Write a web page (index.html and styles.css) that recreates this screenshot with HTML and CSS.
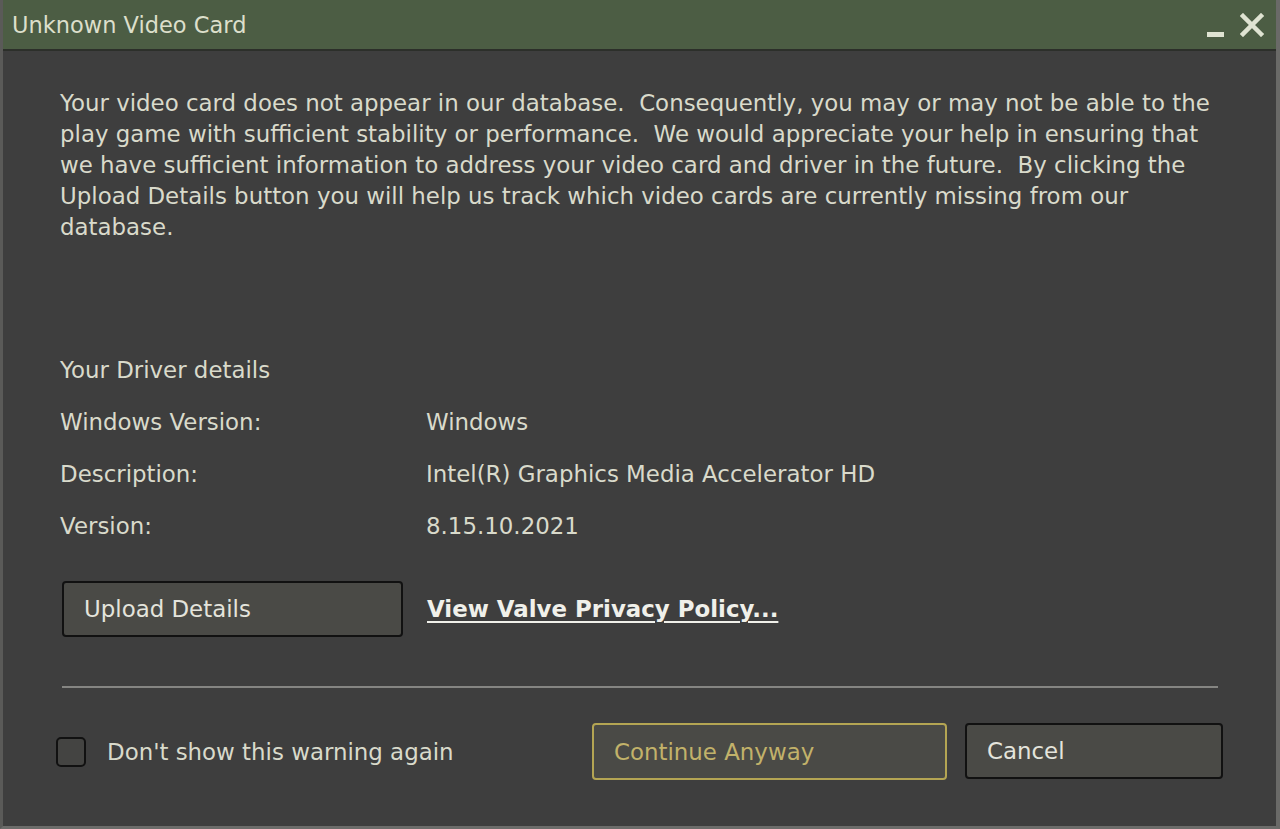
FILE: index.html
```html
<!doctype html>
<html lang="en">
<head>
    <meta charset="UTF-8">
    <title>Unknown Video Card</title>
    <link rel="stylesheet" href="styles.css">
</head>
<body>
    <div class="window">
        <div class="titlebar">
            <span class="title">Unknown Video Card</span>
            <div class="controls">
                <span class="minimize"></span>
                <svg class="close" width="24" height="24" viewBox="0 0 24 24">
                    <path d="M3 3 L21 21 M21 3 L3 21" stroke="#dfe3d2" stroke-width="4.5" stroke-linecap="square"/>
                </svg>
            </div>
        </div>
        <div class="content">
            <p class="message">
                Your video card does not appear in our database.&nbsp; Consequently, you may or may not be able to the<br>
                play game with sufficient stability or performance.&nbsp; We would appreciate your help in ensuring that<br>
                we have sufficient information to address your video card and driver in the future.&nbsp; By clicking the<br>
                Upload Details button you will help us track which video cards are currently missing from our<br>
                database.
            </p>

            <div class="details">
                <div class="details-title">Your Driver details</div>
                <div class="row"><span class="label">Windows Version:</span><span class="value">Windows</span></div>
                <div class="row"><span class="label">Description:</span><span class="value">Intel(R) Graphics Media Accelerator HD</span></div>
                <div class="row"><span class="label">Version:</span><span class="value">8.15.10.2021</span></div>
            </div>

            <div class="upload-row">
                <button class="btn upload">Upload Details</button>
                <a class="privacy" href="#">View Valve Privacy Policy...</a>
            </div>

            <hr class="divider">

            <div class="footer">
                <label class="check">
                    <span class="box"></span>
                    <span>Don't show this warning again</span>
                </label>
                <div class="actions">
                    <button class="btn continue">Continue Anyway</button>
                    <button class="btn cancel">Cancel</button>
                </div>
            </div>
        </div>
    </div>
</body>
</html>
```

FILE: styles.css
```css
html, body {
    margin: 0;
    padding: 0;
    height: 100%;
}

body {
    font-family: "DejaVu Sans", sans-serif;
    background-color: #3e3e3e;
    color: #d9dacb;
    overflow: hidden;
}

.window {
    height: 829px;
    box-sizing: border-box;
    border-left: 3px solid #5a5a58;
    border-right: 4px solid #6a6a68;
    border-bottom: 3px solid #6c6c6a;
    display: flex;
    flex-direction: column;
}

.titlebar {
    height: 49px;
    background-color: #4c5d44;
    border-bottom: 2px solid #2c2f2a;
    display: flex;
    align-items: center;
    justify-content: space-between;
    padding: 0 12px 0 9px;
}

.title {
    font-size: 22.5px;
    color: #dcdfcb;
}

.controls {
    display: flex;
    align-items: center;
    gap: 16px;
}

.minimize {
    width: 17px;
    height: 5px;
    background: #dfe3d2;
    margin-top: 20px;
}

.content {
    flex: 1;
    padding: 0 53px 0 57px;
}

.message {
    font-size: 22.9px;
    line-height: 31px;
    margin: 37px 0 0 0;
}

.details {
    margin-top: 101px;
    font-size: 22.9px;
}

.details-title {
    line-height: 52px;
}

.row {
    display: flex;
    line-height: 52px;
}

.label {
    width: 366px;
}

.upload-row {
    display: flex;
    align-items: center;
    margin-top: 29px;
}

.btn {
    font-family: inherit;
    font-size: 22.9px;
    text-align: left;
    background-color: #4a4a46;
    color: #e4e4dc;
    border: 2px solid #111;
    border-radius: 4px;
    padding: 0 20px;
    cursor: pointer;
}

.upload {
    width: 341px;
    height: 56px;
    margin-left: 2px;
}

.privacy {
    margin-left: 24px;
    font-size: 22.9px;
    font-weight: bold;
    color: #f0f0ea;
    text-decoration: underline;
    text-underline-offset: 4px;
    text-decoration-thickness: 2px;
}

.divider {
    border: none;
    border-top: 2px solid #858582;
    margin: 49px 5px 0 2px;
}

.footer {
    display: flex;
    align-items: center;
    justify-content: space-between;
    margin-top: 35px;
}

.check {
    display: flex;
    align-items: center;
    gap: 21px;
    margin-left: -4px;
    font-size: 22.9px;
}

.box {
    width: 26px;
    height: 26px;
    border: 2px solid #111;
    border-radius: 5px;
    background: #444442;
}

.actions {
    display: flex;
    gap: 18px;
}

.continue {
    width: 355px;
    height: 57px;
    border-color: #b4a553;
    color: #c2b26a;
}

.cancel {
    width: 258px;
    height: 56px;
}
```
